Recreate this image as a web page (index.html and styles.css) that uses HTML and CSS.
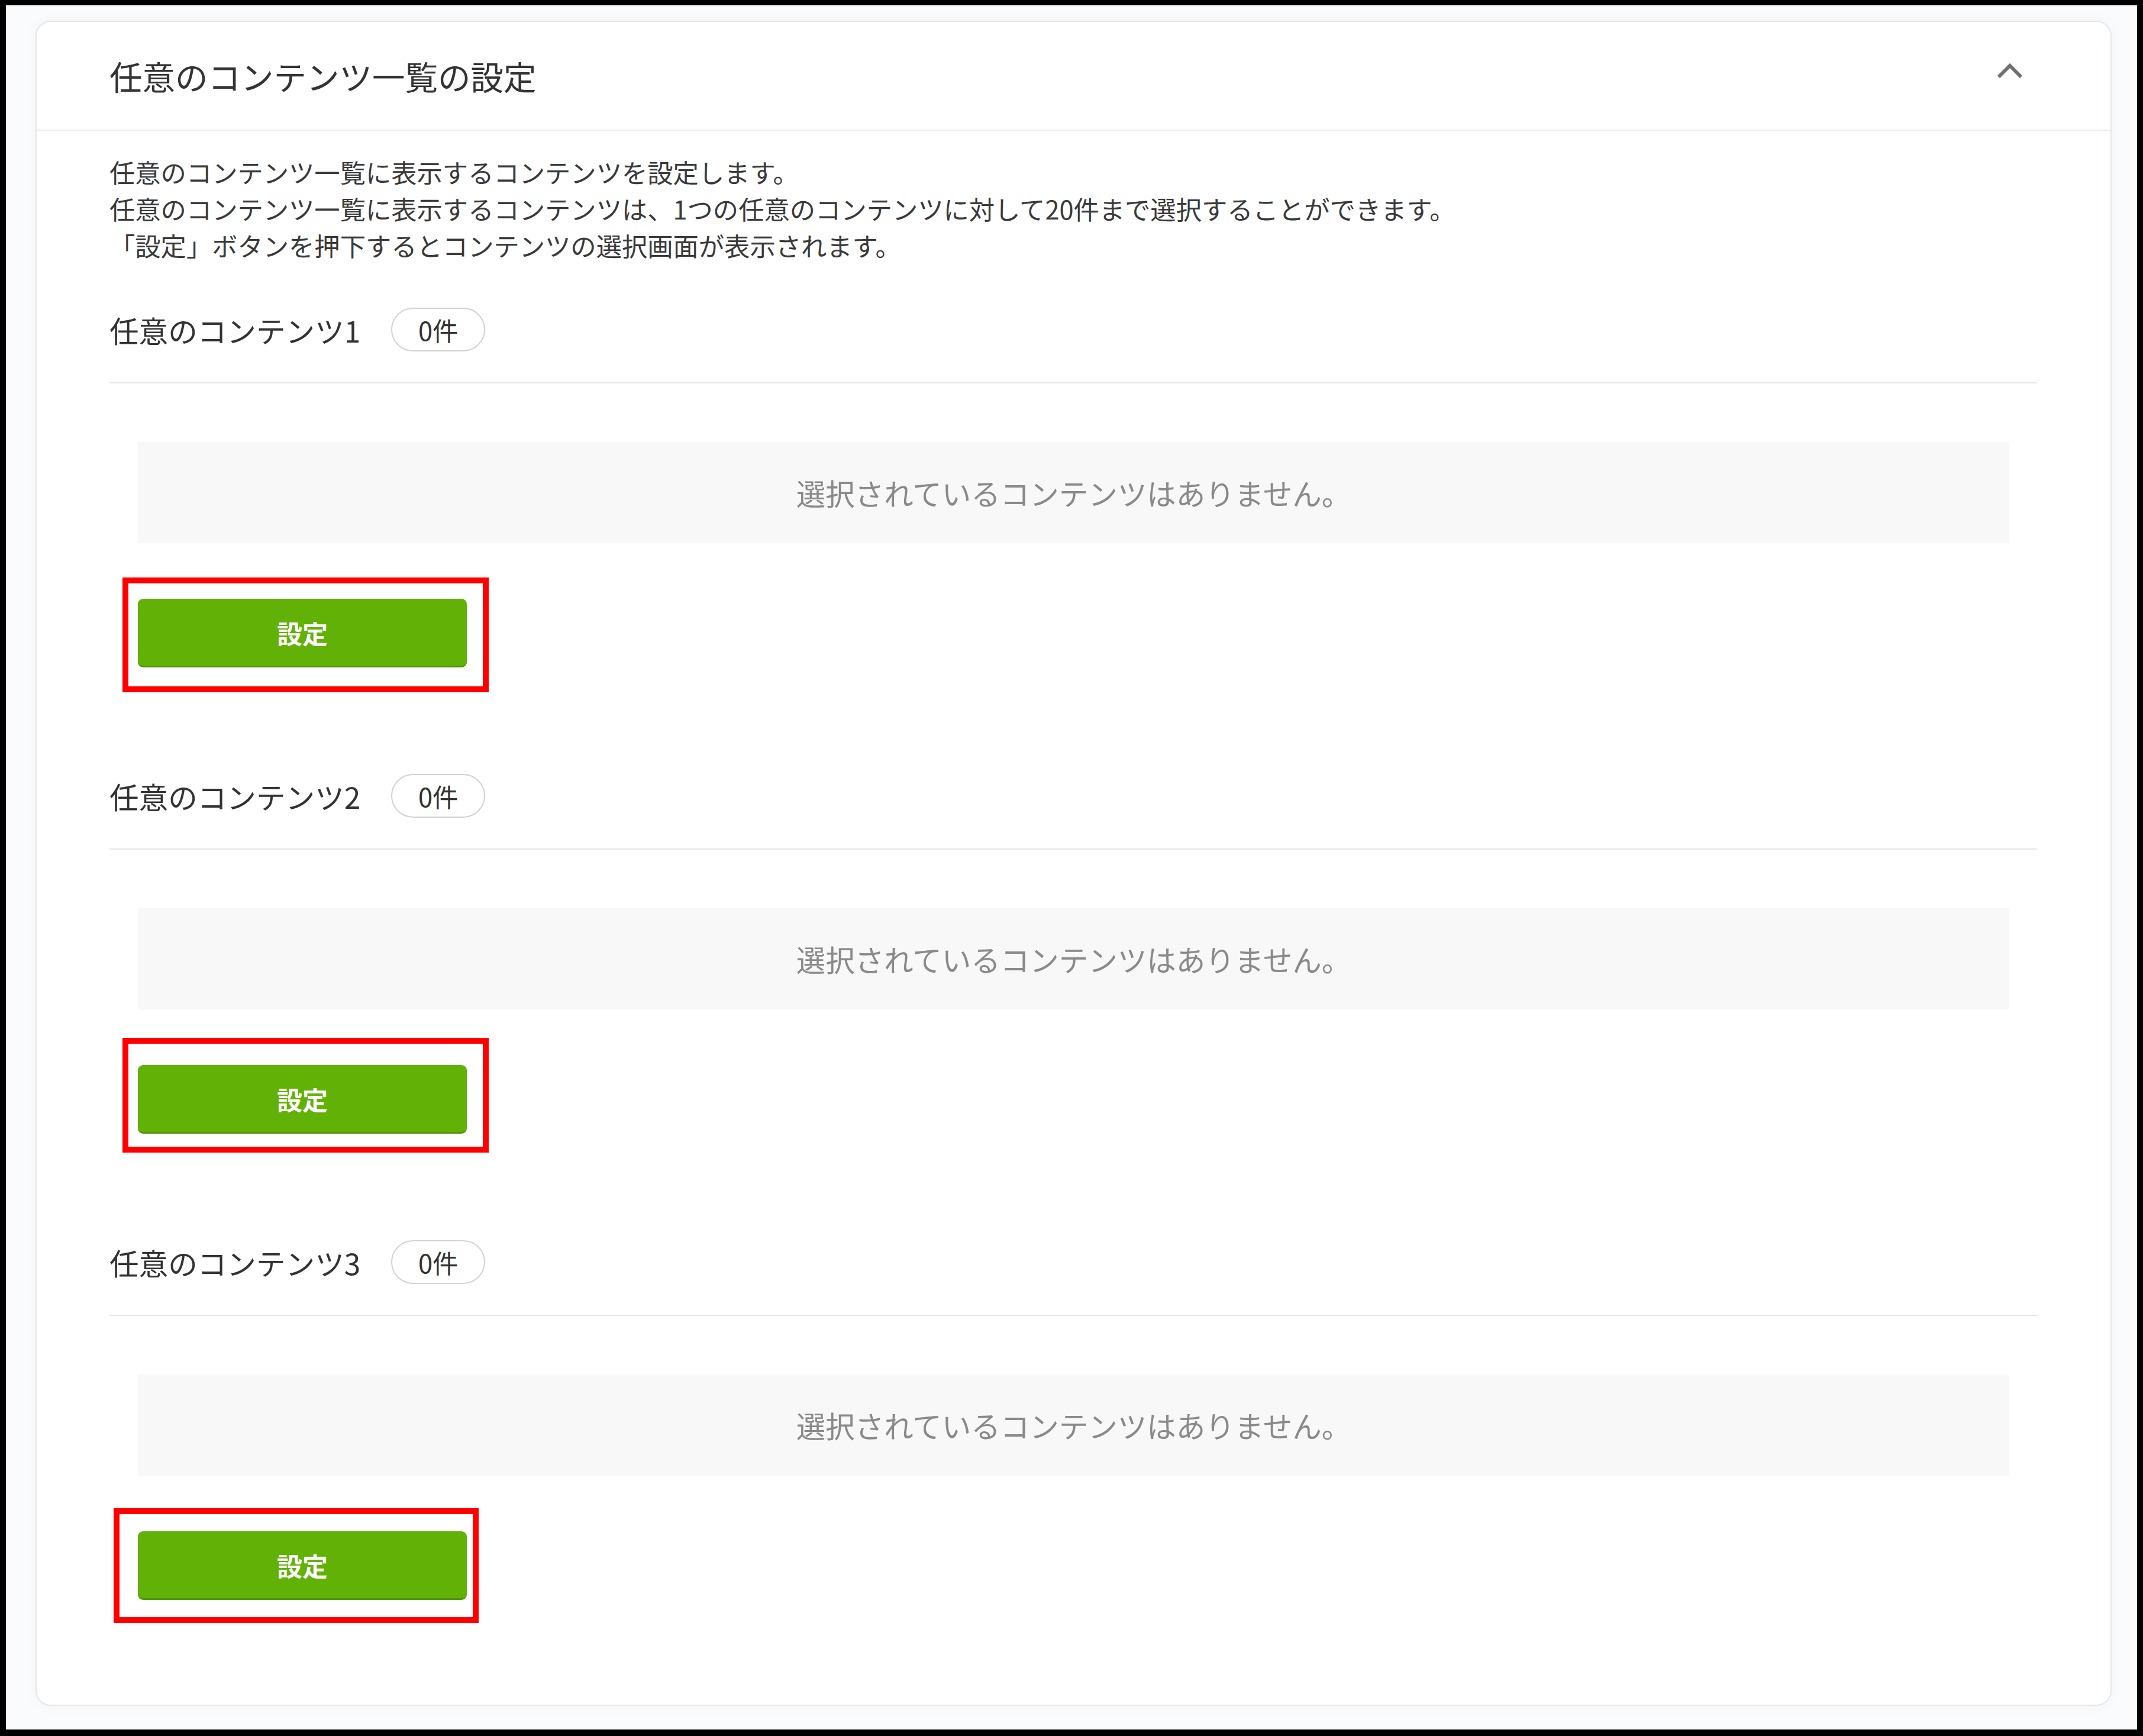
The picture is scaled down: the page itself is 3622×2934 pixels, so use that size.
FILE: index.html
```html
<!DOCTYPE html>
<html lang="ja">
  <head>
    <meta charset="UTF-8" />
    <title>任意のコンテンツ一覧の設定</title>
    <link rel="stylesheet" href="styles.css">
  </head>
  <body>
    <div class="frame">
      <div class="card">
        <div class="card-head">
          <h2 class="card-title">任意のコンテンツ一覧の設定</h2>
          <svg class="chevron" width="46" height="28" viewBox="0 0 46 28">
            <polyline points="4,24 23,5 42,24" fill="none" stroke="#707070" stroke-width="6" />
          </svg>
        </div>
        <div class="card-body">
          <p class="desc">
            任意のコンテンツ一覧に表示するコンテンツを設定します。<br>
            任意のコンテンツ一覧に表示するコンテンツは、1つの任意のコンテンツに対して20件まで選択することができます。<br>
            「設定」ボタンを押下するとコンテンツの選択画面が表示されます。
          </p>

          <div class="section">
            <div class="section-head">
              <span class="section-title">任意のコンテンツ1</span>
              <span class="count">0件</span>
            </div>
            <div class="empty">選択されているコンテンツはありません。</div>
            <div class="btn-row">
              <button type="button" class="btn">設定</button>
              <div class="mark mark-1"></div>
            </div>
          </div>

          <div class="section">
            <div class="section-head">
              <span class="section-title">任意のコンテンツ2</span>
              <span class="count">0件</span>
            </div>
            <div class="empty">選択されているコンテンツはありません。</div>
            <div class="btn-row">
              <button type="button" class="btn">設定</button>
              <div class="mark mark-2"></div>
            </div>
          </div>

          <div class="section">
            <div class="section-head">
              <span class="section-title">任意のコンテンツ3</span>
              <span class="count">0件</span>
            </div>
            <div class="empty">選択されているコンテンツはありません。</div>
            <div class="btn-row">
              <button type="button" class="btn">設定</button>
              <div class="mark mark-3"></div>
            </div>
          </div>
        </div>
      </div>
    </div>
  </body>
</html>
```

FILE: styles.css
```css
body {
    margin: 0;
    padding: 0;
    font-family: "Noto Sans CJK JP", "Noto Sans", sans-serif;
    color: #333;
    background-color: #fff;
}

.frame {
    height: 2934px;
    box-sizing: border-box;
    border: 10px solid #000;
    border-top-width: 9px;
    border-bottom-width: 11px;
    padding: 26px 43px 0 50px;
    background-color: #fafbfc;
}

.card {
    background-color: #fff;
    border: 2px solid #e6e7ea;
    border-radius: 26px;
    box-shadow: 0 0 24px rgba(0, 0, 0, 0.04);
}

.card-head {
    height: 184px;
    box-sizing: border-box;
    display: flex;
    align-items: center;
    justify-content: space-between;
    padding: 0 147px 0 123px;
    border-bottom: 2px solid #ebebeb;
}

.card-title {
    margin: 0;
    font-size: 55.5px;
    font-weight: normal;
    color: #333;
}

.chevron {
    margin-bottom: 16px;
}

.card-body {
    padding: 38px 124px 177px 123px;
}

.desc {
    margin: 0 0 75px;
    font-size: 43.3px;
    line-height: 62px;
    color: #3a3a3a;
}

.section + .section {
    margin-top: 180px;
}

.section-head {
    display: flex;
    height: 126px;
    align-items: flex-start;
    border-bottom: 2px solid #e6e6e6;
}

.section-title {
    font-size: 49.6px;
    line-height: 74px;
    color: #333;
}

.count {
    margin-left: 52px;
    width: 159px;
    height: 74px;
    box-sizing: border-box;
    border: 2px solid #d2d2d2;
    border-radius: 37px;
    display: flex;
    align-items: center;
    justify-content: center;
    font-size: 43.5px;
    color: #333;
}

.empty {
    margin: 99px 47px 0 48px;
    height: 171px;
    display: flex;
    align-items: center;
    justify-content: center;
    background-color: #f8f8f8;
    font-size: 49.5px;
    color: #8a8a8a;
}

.btn-row {
    position: relative;
    margin: 94px 0 0 48px;
    width: 556px;
    height: 116px;
}

.btn {
    width: 556px;
    height: 116px;
    border: none;
    border-bottom: 3px solid #4f9705;
    border-radius: 9px;
    background-color: #61b107;
    color: #fff;
    font-family: "Noto Sans CJK JP", sans-serif;
    font-size: 43px;
    font-weight: bold;
    cursor: pointer;
}

/* 注釈の赤枠 */
.mark {
    position: absolute;
    border: 10px solid #ff0000;
    box-sizing: border-box;
    height: 194px;
    pointer-events: none;
}

.mark-1 {
    left: -26px;
    top: -36px;
    width: 619px;
}

.mark-2 {
    left: -26px;
    top: -46px;
    width: 619px;
}

.mark-3 {
    left: -41px;
    top: -39px;
    width: 617px;
}
```
